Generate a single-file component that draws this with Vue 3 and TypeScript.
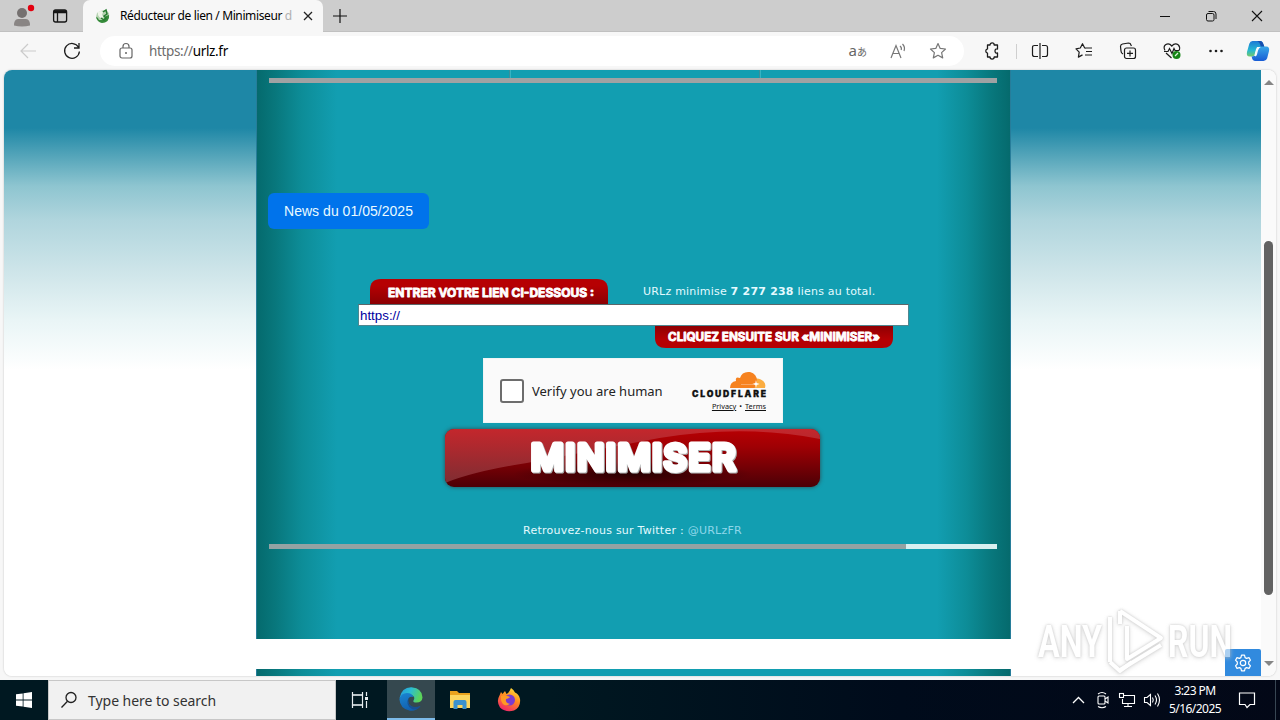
<script setup lang="ts">
import { ref } from 'vue'

const link = ref<string>('https://')
const total = '7 277 238'
const time = '3:23 PM'
const date = '5/16/2025'
</script>

<template>
  <div class="desktop">
    <header class="tabs">
      <svg class="profile" width="48" height="32" viewBox="0 0 48 32">
        <circle cx="22" cy="13" r="5" fill="#757170" />
        <path d="M14 25.500q0-6.500 4-6.500h8q4 0 4 6.500q-8 2-16 0z" fill="#898584" />
        <circle cx="31" cy="8" r="3.200" fill="#e3000f" />
      </svg>
      <svg class="tabmenu" width="24" height="32" viewBox="0 0 24 32" fill="none" stroke="#161616" stroke-width="1.300">
        <rect x="5.600" y="10" width="13" height="12" rx="2" />
        <path d="M5.600 12.500h13M9.500 13v9" /><path d="M6 11.200h12" stroke-width="2" />
      </svg>
      <div class="tab">
        <svg width="16" height="16" viewBox="0 0 16 16">
          <path d="M2 5q5-4 10-2q3 2 2 6q-2 6-7 6q-5-2-6-6z" fill="#b5d2b1" />
          <path d="M1 9q2 0 3 3l4 0l3-4l3-1q1 7-7 8q-5-1-6-6z" fill="#368b3b" />
          <path d="M3 4q3-2 5 0l-1 3l2 2l-3 1q-4-2-3-6z" fill="#eef5e9" />
          <path d="M8 4l3-2l1 4l-3 2l2 2l-2 2l-3-2" fill="none" stroke="#267b30" stroke-width="1.500" />
        </svg>
        <span class="tab-title">Réducteur de lien / Minimiseur <i>d</i></span>
        <svg class="x" width="10" height="10" viewBox="0 0 10 10" stroke="#222" stroke-width="1.300"><path d="M1 1l8 8M9 1l-8 8" /></svg>
      </div>
      <svg class="plus" width="14" height="14" viewBox="0 0 14 14" stroke="#111" stroke-width="1.200"><path d="M7 0v14M0 7h14" /></svg>
      <div class="winctl">
        <svg width="12" height="12" viewBox="0 0 12 12" stroke="#111"><path d="M1 6.500h10" /></svg>
        <svg width="12" height="12" viewBox="0 0 12 12" fill="none" stroke="#111"><rect x="1.500" y="3.500" width="7.500" height="7.500" rx="1.500" /><path d="M3.500 1.500h5q2.500 0 2.500 2.500v5" /></svg>
        <svg width="12" height="12" viewBox="0 0 12 12" stroke="#111" stroke-width="1.100"><path d="M1 1l10 10M11 1L1 11" /></svg>
      </div>
    </header>

    <nav class="toolbar">
      <svg class="back" width="18" height="18" viewBox="0 0 18 18" fill="none" stroke="#cbcbcb" stroke-width="1.200"><path d="M17 9H2M9 2L2 9l7 7" /></svg>
      <svg class="reload" width="18" height="18" viewBox="0 0 18 18" fill="none" stroke="#1c1c1c" stroke-width="1.300"><path d="M15.500 5.300A7.400 7.400 0 1 0 16.400 9.500M16 1v5h-5" /></svg>
      <div class="omnibox">
        <svg class="lock" width="14" height="18" viewBox="0 0 14 18" fill="none" stroke="#666" stroke-width="1.200"><rect x="1" y="6" width="12" height="10" rx="2" /><path d="M4 6V4.500a3 3 0 0 1 6 0V6" /><circle cx="7" cy="11" r="1" fill="#666" stroke="none" /></svg>
        <span class="url">https://<b>urlz.fr</b></span>
        <span class="lang">a<i>あ</i></span>
        <svg class="read" width="17" height="16" viewBox="0 0 17 16" fill="none" stroke="#777" stroke-width="1.200"><path d="M1 15L6 2.500L11 15M3 10.500h6.200M10 3q2 1.500 1.200 4M12.500 1q3 3 1.500 7" /></svg>
        <svg class="star" width="18" height="18" viewBox="0 0 18 18" fill="none" stroke="#777" stroke-width="1.200" stroke-linejoin="round"><path d="M9 1.500l2.200 4.900 5.300.600-3.900 3.600 1.100 5.300L9 13.300l-4.700 2.600 1.100-5.300L1.500 7l5.300-.600z" /></svg>
      </div>
      <div class="tools">
        <svg width="18" height="18" viewBox="0 0 18 18" fill="none" stroke="#1c1c1c" stroke-width="1.300" stroke-linejoin="round"><path d="M5 3h2a2.100 2.100 0 0 1 4.200 0H14.500v4q-2.500-.300-2.500 2t2.500 2v4h-3.300a2.100 2.100 0 0 1-4.200 0H4.500v-3.800a2.200 2.200 0 0 1 0-4.300V3z" /></svg>
        <i class="sep"></i>
        <svg width="18" height="18" viewBox="0 0 18 18" fill="none" stroke="#1c1c1c" stroke-width="1.200"><path d="M7 3.500H3.500q-2 0-2 2v7q0 2 2 2H7M11 3.500h3.500q2 0 2 2v7q0 2-2 2H11M9 1v16" /></svg>
        <svg width="18" height="18" viewBox="0 0 18 18" fill="none" stroke="#1c1c1c" stroke-width="1.200" stroke-linejoin="round"><path d="M11 6.200l-1.300-.200L7.500 1.700L5.300 6L1 6.800l3.200 3.400-.800 4.900 4.100-2.200M11 6h6M11 9.500h6M10 13h7" /></svg>
        <svg width="18" height="18" viewBox="0 0 18 18" fill="none" stroke="#1c1c1c" stroke-width="1.200"><rect x="5.500" y="6" width="11" height="10.500" rx="2" /><path d="M11 8.500v6M8 11.400h6M4 12Q2 11 2 9L1.500 4.500q0-2 2-2.500l6-1q2 0 2.500 2l.4 1" /></svg>
        <svg width="18" height="18" viewBox="0 0 18 18" fill="none" stroke="#1c1c1c" stroke-width="1.200"><path d="M2 8.500Q0 5 2.500 2.800Q6 .700 8.800 4Q12 .500 15.400 3q2 2 .800 5.500M3 11l5.500 5M1 9.500h4l1.500-3 2.500 5 2-5 1 2h4" /><circle cx="13.500" cy="13" r="4" fill="#168616" stroke="none" /><path d="M12 14l3-3" stroke="#dff2df" /></svg>
        <svg width="18" height="18" viewBox="0 0 18 18" fill="#1c1c1c"><circle cx="3.500" cy="9" r="1.300" /><circle cx="9" cy="9" r="1.300" /><circle cx="14.500" cy="9" r="1.300" /></svg>
      </div>
      <svg class="copilot" width="24" height="22" viewBox="0 0 26 24">
        <defs>
          <linearGradient id="ca" x1="0" y1="0" x2="0" y2="1"><stop offset="0" stop-color="#1c78d5" /><stop offset=".6" stop-color="#25b9d2" /><stop offset="1" stop-color="#75c96a" /></linearGradient>
          <linearGradient id="cb" x1="0" y1="0" x2="0" y2="1"><stop offset="0" stop-color="#38a8e8" /><stop offset="1" stop-color="#185bd5" /></linearGradient>
        </defs>
        <path d="M7 1h9q2 0 3 4l1 3h-5q-3 0-4 3l-1 4q-1 3-4 3H4q-4 0-3-5L3.500 4Q4.500 1 7 1z" fill="url(#ca)" />
        <path d="M19 23h-9q-3 0-4-5q4 0 5-3l2-6q1-2 3-2h6q4 0 3 5l-2 8q-1 3-4 3z" fill="url(#cb)" />
        <path d="M12 7.500h4q-2 1-3 4l-1 4q-.5 2-2 2.500-1-1-.5-3l1.300-5z" fill="#f4fafc" />
        <path d="M15 1q3 0 4 4l1 2h-4q-1-5-4-6z" fill="#174faf" />
      </svg>
    </nav>

    <main class="viewport">
      <div class="page">
        <section class="site">
          <div class="menu-end"><i></i><i></i></div>
          <div class="rule top"></div>
          <button class="news">News du 01/05/2025</button>
          <form class="shorten" @submit.prevent>
            <div class="row">
              <svg class="label" width="238" height="25" viewBox="0 0 238 25">
                <defs><linearGradient id="la" x1="0" y1="0" x2="0" y2="1"><stop offset=".25" stop-color="#b60003" /><stop offset="1" stop-color="#8b0003" /></linearGradient></defs>
                <path d="M0 25V11Q0 0 11 0H227Q238 0 238 11V25z" fill="url(#la)" />
                <text class="brand" x="18" y="17.500" textLength="206" lengthAdjust="spacingAndGlyphs">ENTRER VOTRE LIEN CI-DESSOUS :</text>
              </svg>
              <p class="count">URLz minimise <b>{{ total }}</b> liens au total.</p>
            </div>
            <input v-model="link" class="link" />
            <svg class="label next" width="238" height="22" viewBox="0 0 238 22">
              <defs><linearGradient id="lb" x1="0" y1="0" x2="0" y2="1"><stop offset="0" stop-color="#8f0003" /><stop offset=".6" stop-color="#b50003" /></linearGradient></defs>
              <path d="M0 0V12Q0 22 11 22H227Q238 22 238 12V0z" fill="url(#lb)" />
              <text class="brand" x="13" y="14.500" textLength="212" lengthAdjust="spacingAndGlyphs">CLIQUEZ ENSUITE SUR «MINIMISER»</text>
            </svg>
            <div class="captcha">
              <span class="box"></span>
              <span class="verify">Verify you are human</span>
              <div class="cf">
                <svg width="75" height="28" viewBox="0 0 75 28">
                  <path d="M57 17Q57 11 62 8q7-2 11 3q2 2 1 6z" fill="#fbad41" />
                  <path d="M39 17Q39 11 45 10Q44 5 49 7Q51 0 59 1q7 2 7 9l-2 6q0 1-1 1z" fill="#f6821f" />
                  <path d="M50 13.500h12" stroke="#fbb680" stroke-width=".7" /><path d="M65 9l.7 3 3 1-3 1-.7 3-.7-3-3-1 3-1z" fill="#fff" />
                  <text class="cf-name" x="1" y="26" textLength="74">CLOUDFLARE</text>
                </svg>
                <p class="legal"><u>Privacy</u><span>•</span><u>Terms</u></p>
              </div>
            </div>
            <svg class="submit" width="375" height="58" viewBox="0 0 376 58" preserveAspectRatio="none">
              <defs>
                <linearGradient id="ba" x1="0" y1="0" x2="0" y2="1"><stop offset="0" stop-color="#b80003" /><stop offset=".3" stop-color="#a00004" /><stop offset="1" stop-color="#4b0006" /></linearGradient>
                <linearGradient id="bb" x1="0" y1="0" x2="0" y2="1"><stop offset="0" stop-color="#c52b31" /><stop offset="1" stop-color="#843237" /></linearGradient>
                <radialGradient id="bs"><stop offset="0" stop-color="#1c0000" stop-opacity=".85" /><stop offset="1" stop-color="#1c0000" stop-opacity="0" /></radialGradient>
                <clipPath id="bc"><rect width="376" height="58" rx="9" /></clipPath>
              </defs>
              <g clip-path="url(#bc)">
                <rect width="376" height="58" fill="url(#ba)" />
                <path d="M0 0H376V10Q300-5 215 9L82 34Q30 42 0 54z" fill="url(#bb)" opacity=".9" />
                <ellipse cx="188" cy="45" rx="120" ry="12" fill="url(#bs)" />
              </g>
              <text class="big" x="86" y="41" textLength="205">MINIMISER</text>
            </svg>
          </form>
          <p class="twitter">Retrouvez-nous sur Twitter : <a>@URLzFR</a></p>
          <div class="rule bottom"></div>
        </section>
        <section class="site footer"></section>
      </div>
      <aside class="scroll">
        <i class="up"></i><i class="thumb"></i><i class="down"></i>
      </aside>
      <div class="gear">
        <svg width="18" height="18" viewBox="0 0 18 18" fill="none" stroke="#fff" stroke-width="1.200" stroke-linejoin="round"><path d="M7.500 1.200h3l.6 2.400 1.500.8 2.400-.8 1.500 2.600-1.800 1.800v2l1.800 1.800-1.500 2.600-2.400-.800-1.500.800-.6 2.400h-3l-.6-2.400-1.500-.8-2.400.8-1.500-2.600L3.300 10V8L1.500 6.200 3 3.600l2.400.8 1.500-.8z" /><circle cx="9" cy="9" r="2.700" /></svg>
      </div>
    </main>

    <footer class="taskbar">
      <div class="start">
        <svg width="16" height="16" viewBox="0 0 16 16" fill="#fff"><path d="M0 2.300L6.700 1.400V7.600H0zM7.500 1.300L16 0V7.600H7.500zM0 8.400H6.700V14.600L0 13.700zM7.500 8.400H16V16L7.500 14.800z" /></svg>
      </div>
      <div class="search">
        <svg width="18" height="18" viewBox="0 0 18 18" fill="none" stroke="#202020" stroke-width="1.300"><circle cx="10" cy="6.500" r="5" /><path d="M6.500 10.200L.5 16.500" /></svg>
        <span>Type here to search</span>
      </div>
      <div class="app">
        <svg width="18" height="18" viewBox="0 0 18 18" fill="none" stroke="#e7edf0" stroke-width="1.200"><path d="M1.500 1v3h10V1M1.500 17v-3h10v3M15.500 1v4M15.500 10v7" /><rect x="1.500" y="4" width="10" height="10" /><path d="M14 7.500h3" stroke-width="3" /></svg>
      </div>
      <div class="app active">
        <svg width="24" height="24" viewBox="0 0 24 24">
          <defs>
            <linearGradient id="ea" x1="0" y1="0" x2="1" y2=".3"><stop offset="0" stop-color="#2497dc" /><stop offset=".5" stop-color="#2bbdd3" /><stop offset="1" stop-color="#5bd45a" /></linearGradient>
            <linearGradient id="eb" x1="0" y1="0" x2=".4" y2="1"><stop offset="0" stop-color="#1a86d3" /><stop offset="1" stop-color="#125fae" /></linearGradient>
          </defs>
          <path d="M.5 11Q3 0 12.500.3Q23.500 1.500 23.500 10.500q-.5 5-6 5-4 0-3-2 2-3-1-5Q7 5 .5 11z" fill="url(#ea)" />
          <path d="M.4 12Q2 6 8 6q5 0 6.500 4Q9 9 9 14q1 7 9 6.300 2-.500 3.500-1.300Q17 24.500 11 23.700Q1 22 .4 12z" fill="url(#eb)" />
          <path d="M9.500 11Q6 18 13 22q5 2 8.500-3-9 3-12-3z" fill="#174f92" />
        </svg>
      </div>
      <div class="app">
        <svg width="22" height="20" viewBox="0 0 22 20"><path d="M1 1h7l2 2h11v5H1z" fill="#e9a21d" /><path d="M1 5h20v13H1z" fill="#fbd55e" /><path d="M4.500 19v-7q0-2 2-2h9q2 0 2 2v7h-4v-4h-5v4z" fill="#3a91ce" /></svg>
      </div>
      <div class="app">
        <svg width="24" height="24" viewBox="0 0 24 24">
          <defs><linearGradient id="fa" x1=".8" y1="0" x2=".3" y2="1"><stop offset="0" stop-color="#ffe43b" /><stop offset=".45" stop-color="#ff8a20" /><stop offset="1" stop-color="#f0246b" /></linearGradient></defs>
          <path d="M14 0q3 2 4 4.500Q22 6 23 11q1 8-6 11.500-8 2.500-14-3-4-6-.5-12L4 4l1.500 2L8 3l1.500 3Q12 5 14 0z" fill="url(#fa)" />
          <circle cx="12.500" cy="12" r="5.500" fill="#7a3bd0" /><path d="M4 8q4-2 9 1-2 2-4 2-1 4 4 5Q6 20 4 12z" fill="#ff9a24" />
        </svg>
      </div>
      <div class="tray">
        <svg width="13" height="18" viewBox="0 0 13 18" fill="none" stroke="#fff" stroke-width="1.300"><path d="M1 12l5.500-5.500L12 12" /></svg>
        <svg width="16" height="18" viewBox="0 0 16 18" fill="none" stroke="#fff" stroke-width="1.100"><rect x="3" y="5" width="7" height="8" rx="1" /><path d="M10 8l3-2v6l-3-2M3 3Q7 0 11 3M3 15.500q4 2.500 8 0" /></svg>
        <svg width="18" height="18" viewBox="0 0 18 18" fill="none" stroke="#fff" stroke-width="1.100"><path d="M6 4.500h10.500v8H4.500V8M10 12.500v3M6 15.500h8" /><rect x="1.500" y="2.500" width="4" height="4" /></svg>
        <svg width="18" height="18" viewBox="0 0 18 18" fill="none" stroke="#fff" stroke-width="1.100"><path d="M1.500 6.500H4l3.500-3v11L4 11.500H1.500zM9.500 6.500q1.500 2.500 0 5M12 4.500q3 4.500 0 9M14.500 2.500q4 6.500 0 13" /></svg>
        <div class="clock"><span>{{ time }}</span><span>{{ date }}</span></div>
        <svg class="note" width="18" height="18" viewBox="0 0 18 18" fill="none" stroke="#fff" stroke-width="1.200"><path d="M1.500 2h15v11.500H12L9 16.500 7 13.500H1.500z" /></svg>
        <i class="peek"></i>
      </div>
    </footer>

    <svg class="watermark" width="204" height="76" viewBox="0 0 204 76">
      <text x="4" y="53" textLength="64" lengthAdjust="spacingAndGlyphs">ANY</text>
      <text x="134" y="53" textLength="64" lengthAdjust="spacingAndGlyphs">RUN</text>
      <g fill="none" stroke="#fff" stroke-width="4" stroke-linejoin="round">
        <path d="M86 7L127 34L93 55V22" /><path d="M76 13V58M86 7V20M86 66L127 41" /><path d="M76 58L86 67L98 58" />
      </g>
    </svg>
  </div>
</template>

<style>
body {
  margin: 0;
  overflow: hidden;
}
</style>

<style scoped>
.desktop {
  position: relative;
  display: flex;
  flex-direction: column;
  width: 1280px;
  height: 720px;
  overflow: hidden;
  background: #f7f7f7;
  font-family: "Noto Sans", "Open Sans", sans-serif;
}
.desktop * { box-sizing: border-box; }
svg { display: block; flex: none; overflow: visible; }
p { margin: 0; }

.tabs { display: flex; align-items: center; height: 32px; background: #cdcdcd; border-bottom: 1px solid #c0c0c0; }
.tab { display: flex; align-items: center; width: 240px; height: 32px; margin-left: 11px; padding-left: 12px; background: #f7f7f7; border-radius: 7px 7px 0 0; }
.tab-title { width: 183px; padding-left: 9px; white-space: nowrap; font-size: 12px; letter-spacing: -0.380px; color: #000; }
.tab-title i { font-style: normal; color: #b0b0b0; }
.x { margin-left: 9px; }
.plus { margin-left: 10px; }
.winctl { display: flex; gap: 34px; margin-left: auto; padding-right: 17px; }

.toolbar { display: flex; align-items: center; height: 38px; }
.back { margin-left: 19px; }
.reload { margin-left: 26px; }
.omnibox { display: flex; align-items: center; width: 864px; height: 30px; margin-left: 19px; padding: 0 17px 0 19px; background: #fff; border-radius: 15px; }
.url { margin-left: 16px; color: #6c6c6c; font-size: 13.500px; letter-spacing: -0.350px; }
.url b { color: #000; font-weight: 400; }
.lang { margin-left: auto; color: #666; font-size: 15px; line-height: 18px; padding-bottom: 3px; white-space: nowrap; }
.lang i { font: 10px "Noto Sans CJK JP", sans-serif; }
.read { margin-left: 23px; }
.star { margin-left: 22px; }
.tools { display: flex; align-items: center; margin-left: 19px; }
.tools svg { margin-right: 26px; }
.tools svg:first-child { margin-right: 15px; }
.sep { width: 1px; height: 15px; margin-right: 14px; background: #cfcfcf; }
.copilot { margin-left: -5px; }

.viewport { position: relative; display: flex; width: 1272px; height: 606px; margin-left: 4px; overflow: hidden; border-radius: 8px; background: #fff; box-shadow: 0 0 2px #b9b9b9; }
.page { flex: 1; background: linear-gradient(180deg, #1e87a6 0, #1e87a6 58px, #58a7bb 88px, #8ec5d0 116px, #b0d5dd 150px, #d0e6ea 205px, #e9f5f6 250px, #fff 300px); }
.site {
  display: flex;
  flex-direction: column;
  width: 755px;
  height: 569px;
  margin-left: 252px;
  border: 1px solid #277d9a;
  border-width: 0 1px;
  background: linear-gradient(90deg, #056a6d 0, #08777c 18px, #0d8d98 45px, #129eb1 80px, #129eb1 680px, #0d8d98 709px, #08777c 735px, #056a6d 100%);
}
.footer { height: 7px; margin-top: 30px; }
.menu-end { display: flex; height: 8px; padding-left: 252px; gap: 249px; }
.menu-end i { width: 1px; background: #3b8f9b; box-shadow: 1px 0 #36b3c2; }
.rule { flex: none; width: 728px; height: 5px; margin-left: 12px; }
.top { background: #a0a2a3; }
.bottom { margin-top: 5px; background: linear-gradient(90deg, #94a2a3 637px, #d8eff0 637px); }
.news { width: 161px; height: 36px; margin: 110px 0 0 11px; padding: 0; border: 0; border-radius: 6px; background: #0073eb; color: #e9faff; font: 14px "Liberation Sans", sans-serif; letter-spacing: 0.030px; }
.shorten { display: flex; flex-direction: column; width: 551px; margin: 50px 0 0 101px; }
.row { display: flex; height: 25px; padding-left: 12px; }
.count, .twitter { color: #e4faff; font: 11px/16px "DejaVu Sans", sans-serif; white-space: nowrap; letter-spacing: 0.210px; }
.count { margin: 5px 0 0 35px; }
.brand { fill: #fff; stroke: #fff; stroke-width: 0.800px; stroke-linejoin: round; font: 700 11.500px Inter, sans-serif; }
.link { width: 551px; height: 22px; padding: 0 1px; border: 1px solid #4f8790; border-top-color: #5b6669; background: #fff; color: #0000a0; font: 13.330px "Liberation Sans", sans-serif; outline: 0; }
.next { margin-left: 297px; }
.captcha { display: flex; width: 300px; height: 65px; margin: 10px 0 0 125px; padding: 0 16px 0 16px; border: 1px solid #f1f5f5; background: #fafafa; align-items: center; }
.box { width: 24px; height: 24px; border: 2px solid #6d6d6d; border-radius: 3px; background: #fff; }
.verify { margin-left: 8px; font-size: 13px; color: #232323; white-space: nowrap; }
.cf { display: flex; flex-direction: column; align-items: flex-end; margin-left: auto; padding-top: 1px; }
.cf-name { fill: #111; stroke: #111; stroke-width: 0.300px; font: 900 8.600px Inter, sans-serif; }
.legal { display: flex; gap: 3px; margin-top: 2px; font-size: 7.300px; line-height: 11px; color: #111; }
.submit { margin: 6px 0 0 87px; filter: drop-shadow(0 0 2px #30464b); }
.big { fill: #fff; stroke: #fff; stroke-width: 5.200px; stroke-linejoin: round; font: 500 36px Inter, sans-serif; filter: drop-shadow(1px 1.500px 0 #a9aeae); }
.twitter { margin-top: 36px; padding-right: 2px; text-align: center; letter-spacing: 0.250px; }
.twitter a { color: #8ed7ea; }

.scroll { display: flex; flex-direction: column; align-items: center; width: 15px; background: #fafafa; }
.up, .down { border: 5px solid transparent; }
.up { border-top: 0; border-bottom-color: #858585; margin-top: 10px; }
.down { border-bottom: 0; border-top-color: #858585; margin-top: 66px; }
.thumb { width: 9px; height: 354px; margin-top: 156px; background: #626262; border-radius: 5px; }
.gear { position: absolute; right: 15px; bottom: 0; display: grid; place-items: center; width: 36px; height: 27px; border-radius: 2px 2px 0 0; background: #318ade; }

.taskbar { display: flex; height: 40px; margin-top: 4px; background: linear-gradient(90deg, #001821 0, #001821 550px, #000b1b 900px, #030817 100%); }
.start { display: grid; place-items: center; width: 48px; }
.search { display: flex; align-items: center; width: 288px; padding-left: 12px; background: #f1f1f1; border: 1px solid #c7c7c7; }
.search span { margin-left: 9px; color: #333; font-size: 14px; letter-spacing: -0.040px; white-space: nowrap; }
.app { display: grid; place-items: center; width: 49px; }
.app:nth-child(3) { width: 51px; padding-right: 3px; }
.active { width: 48px; background: #35484f; border-bottom: 2px solid #7dbbe9; }
.tray { display: flex; align-items: center; flex: 1; justify-content: flex-end; gap: 7px; color: #fff; }
.tray > svg:first-child { margin-right: 3px; }
.clock { display: flex; flex-direction: column; align-items: center; width: 54px; margin: 0 9px 0 0; font-size: 12px; line-height: 18px; letter-spacing: -0.550px; white-space: nowrap; }
.peek { width: 1px; height: 40px; margin: 0 4px 0 12px; background: #384653; }

.watermark { position: absolute; left: 1034px; top: 604px; opacity: 0.6; filter: drop-shadow(0 0 1px #aaa) drop-shadow(0 1px 2px #ccc); pointer-events: none; }
.watermark text { fill: #fff; font: 700 44px Roboto, sans-serif; }
</style>
